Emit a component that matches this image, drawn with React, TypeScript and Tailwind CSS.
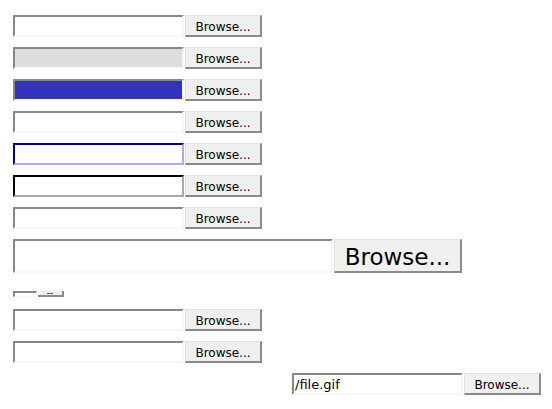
import React from "react";

function Row({ field, w = "w-[171px]", mt, text }: { field: string; w?: string; mt: string; text?: string }) {
  return (
    <div className={`flex items-stretch h-[22px] ${mt}`}>
      <div className={`${w} h-[22px] border-2 ${field} flex items-center pl-[1px] pt-[1px] text-[13px] text-black`}>
        {text}
      </div>
      <div className="ml-[1px] w-[77px] h-[22px] bg-[#f0f0f0] border-t border-l border-t-[#e0e0e0] border-l-[#e0e0e0] border-b-2 border-r-2 border-b-[#8a8a8a] border-r-[#8a8a8a] flex items-center justify-center pt-[2px] text-[12px] text-black leading-none">
        Browse...
      </div>
    </div>
  );
}

const normal = "border-t-[#888] border-l-[#888] border-b-[#f7f7f7] border-r-[#f7f7f7] bg-white";

export default function App() {
  return (
    <div className="w-[552px] h-[409px] bg-white pl-[13px] pt-[15px]" style={{ fontFamily: '"DejaVu Sans", "Liberation Sans", sans-serif' }}>
      <Row mt="" field={normal} />
      <Row mt="mt-[10px]" field="border-t-[#888] border-l-[#888] border-b-[#f7f7f7] border-r-[#f7f7f7] bg-[#dddddd]" />
      <Row mt="mt-[10px]" field="border-t-[#888] border-l-[#888] border-b-[#f7f7f7] border-r-[#f7f7f7] bg-[#3333bb]" />
      <Row mt="mt-[10px]" field={normal} />
      <Row mt="mt-[10px]" field="border-t-[#000088] border-l-[#000088] border-b-[#aaaaff] border-r-[#aaaaff] bg-white" />
      <Row mt="mt-[10px]" field="border-t-[#000] border-l-[#000] border-b-[#aaaaaa] border-r-[#aaaaaa] bg-white" />
      <Row mt="mt-[10px]" field={normal} />
      <div className="flex mt-[10px] h-[34px]">
        <div className={`w-[320px] h-[34px] border-2 ${normal}`} />
        <div className="ml-[1px] w-[128px] h-[34px] bg-[#f0f0f0] border-t border-l border-t-[#e0e0e0] border-l-[#e0e0e0] border-b-2 border-r-2 border-b-[#8a8a8a] border-r-[#8a8a8a] flex items-center justify-center pt-[3px] text-[23px] text-black leading-none">
          Browse...
        </div>
      </div>
      <div className="flex mt-[18px] h-[6px]">
        <div className={`w-[24px] h-[6px] border-t-2 border-l-2 border-b border-r ${normal}`} />
        <div className="ml-[1px] w-[26px] h-[6px] bg-[#f0f0f0] border-b-2 border-r-2 border-b-[#8a8a8a] border-r-[#8a8a8a] flex items-center justify-center">
          <div className="w-[6px] h-[1px] bg-[#555]" />
        </div>
      </div>
      <Row mt="mt-[12px]" field={normal} />
      <Row mt="mt-[10px]" field={normal} />
      <div className="flex justify-start pl-[279px]">
        <Row mt="mt-[10px]" field={normal} text="/file.gif" />
      </div>
    </div>
  );
}
